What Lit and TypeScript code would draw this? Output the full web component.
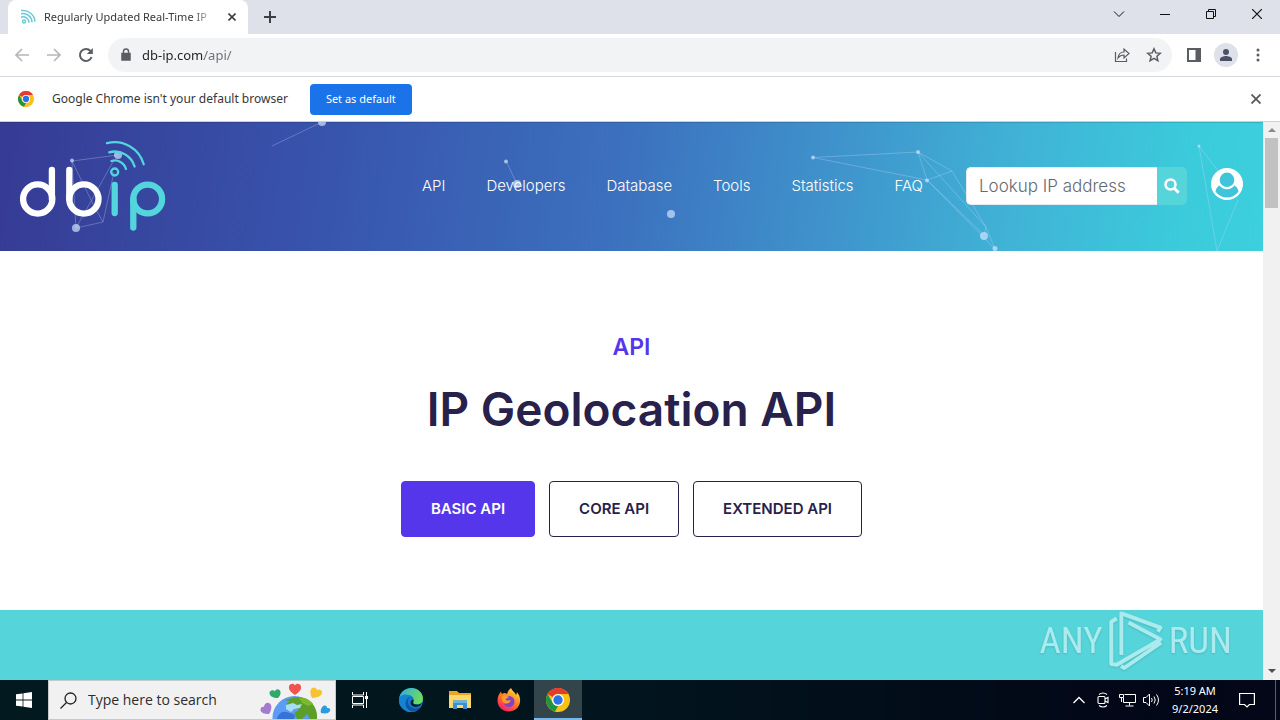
import { LitElement, html, css, svg } from "lit";
import { customElement } from "lit/decorators.js";

const chromeLogo = svg`
  <circle cx="12" cy="12" r="12" fill="#fbc116"/>
  <path d="M1.6 6A12 12 0 0 1 22.4 6H12A6 6 0 0 0 6.8 9Z" fill="#e33b2e"/>
  <path d="M1.6 6 6.8 15A6 6 0 0 0 12 18L12.2 18 9.5 23.7A12 12 0 0 1 1.6 6Z" fill="#229342"/>
  <path d="M17.2 15 12 24A12 12 0 0 1 9 23.6L12.2 18Z" fill="#fbc116"/>
  <circle cx="12" cy="12" r="6" fill="#fff"/>
  <circle cx="12" cy="12" r="4.7" fill="#2a74e8"/>`;

@customElement("browser-tabs")
export class BrowserTabs extends LitElement {
  static styles = css`
    :host { display: block; background: #dee1e9; font: 11px/16px "Noto Sans", sans-serif; }
    .strip { display: flex; height: 34px; align-items: stretch; }
    .tab { box-sizing: border-box; width: 240px; margin-left: 8px; padding: 0 8px 0 12px; display: flex; align-items: center; gap: 8px; background: #fff; border-radius: 8px 8px 0 0; color: #35373b; }
    .title { flex: 1; min-width: 0; white-space: nowrap; mask-image: linear-gradient(90deg, #000 148px, transparent 174px); }
    .favicon { stroke: #6cc9d8; }
    button { border: 0; background: none; padding: 0; display: grid; place-items: center; }
    .close { width: 16px; height: 16px; }
    .add { width: 44px; }
    .controls { margin-left: auto; display: flex; height: 28px; }
    .controls button { width: 46px; }
    svg { display: block; fill: none; stroke: #111; }
    svg.favicon { stroke: #6cc9d8; }
    .close svg, .add svg { stroke: #3c3f44; }
  `;
  render() {
    return html`<div class="strip">
      <div class="tab">
        <svg class="favicon" width="16" height="16" viewBox="0 0 16 16" stroke-width="1.500"><circle cx="4" cy="12.6" r="1.5"/><path d="M1 8.2a6 6 0 0 1 8 5.6M1 4.8a9 9 0 0 1 11 8.4M1 1.6a12 12 0 0 1 14 11"/></svg>
        <span class="title">Regularly Updated Real-Time IP</span>
        <button class="close" aria-label="Close tab"><svg width="8" height="8" viewBox="0 0 8 8" stroke-width="1.600"><path d="m.5.5 7 7m0-7-7 7"/></svg></button>
      </div>
      <button class="add" aria-label="New tab"><svg width="12" height="12" viewBox="0 0 12 12" stroke-width="2"><path d="M6 0v12M0 6h12"/></svg></button>
      <div class="controls">
        <button aria-label="Search tabs"><svg width="12" height="12" viewBox="0 0 12 12"><path d="m1 3.500 5 5 5-5"/></svg></button>
        <button aria-label="Minimize"><svg width="10" height="10" viewBox="0 0 10 10"><path d="M0 5.500h10"/></svg></button>
        <button aria-label="Restore"><svg width="10" height="10" viewBox="0 0 10 10"><path d="M.5 2.500h7v7h-7zM2.500 2.500v-2h7v7h-2"/></svg></button>
        <button aria-label="Close"><svg width="10" height="10" viewBox="0 0 10 10" stroke-width="1.200"><path d="m0 0 10 10M10 0 0 10"/></svg></button>
      </div>
    </div>`;
  }
}

@customElement("browser-toolbar")
export class BrowserToolbar extends LitElement {
  static styles = css`
    :host { display: block; background: #fff; border-bottom: 1px solid #d5d8dc; }
    .bar { height: 42px; padding: 0 10px; display: flex; align-items: center; gap: 8px; }
    button { border: 0; background: none; padding: 0; width: 24px; height: 24px; display: grid; place-items: center; }
    svg { display: block; fill: none; stroke: #5a5d61; }
    .history { display: flex; gap: 8px; }
    .idle { stroke: #b5b7ba; }
    .omnibox { flex: 1; height: 34px; border-radius: 17px; background: #f1f3f5; display: flex; align-items: center; gap: 9px; padding: 0 6px 0 11px; margin: 0 2px; }
    .url { flex: 1; min-width: 0; border: 0; padding: 0; outline: 0; font: 13px/20px "Noto Sans", sans-serif; color: transparent; -webkit-text-fill-color: transparent; background: linear-gradient(90deg, #202124 62px, #6b6e73 62px); background-clip: text; -webkit-background-clip: text; }
    .actions { display: flex; gap: 8px; }
    .avatar { background: #dee1e9; border-radius: 50%; }
  `;
  render() {
    return html`<div class="bar">
      <div class="history">
        <button aria-label="Back"><svg class="idle" width="14" height="14" viewBox="0 0 14 14" stroke-width="1.700"><path d="M14 7H1M7 1 1 7l6 6"/></svg></button>
        <button aria-label="Forward"><svg class="idle" width="14" height="14" viewBox="0 0 14 14" stroke-width="1.700"><path d="M0 7h13M7 1l6 6-6 6"/></svg></button>
        <button aria-label="Reload"><svg width="16" height="16" viewBox="0 0 16 16" stroke-width="2"><path d="M13.600 10A6 6 0 1 1 12.500 4"/><path d="M14.800 1v6h-6z" fill="#5a5d61" stroke="none"/></svg></button>
      </div>
      <div class="omnibox">
        <svg width="14" height="14" viewBox="0 0 14 14"><path d="M3 5.500h8v6.500h-8z" fill="#5a5d61" stroke-width="1.500"/><path d="M4.500 5.500V3.500a2.500 2.500 0 0 1 5 0v2" stroke-width="1.400"/></svg>
        <input class="url" aria-label="Address" .value=${"db-ip.com/api/"}>
        <div class="actions">
          <button aria-label="Share"><svg width="16" height="16" viewBox="0 0 16 16" stroke-width="1.200"><path d="M1.500 5v9.500h11v-3M4 11c.5-4 2.500-6 6-6V2l5 4.500-5 4.500V8C7.500 8 5.500 9 4 11Z"/></svg></button>
          <button aria-label="Bookmark"><svg width="16" height="16" viewBox="0 0 16 16" stroke-width="1.500"><path d="m8 1.800 1.800 4.100 4.500.4-3.400 3 1 4.400L8 11.400l-3.900 2.300 1-4.400-3.400-3 4.500-.4z"/></svg></button>
        </div>
      </div>
      <div class="actions">
        <button aria-label="Side panel"><svg width="14" height="14" viewBox="0 0 14 14"><path d="M1 1h12v12H1z" stroke-width="2"/><path d="M9 1h4v12H9z" fill="#5a5d61"/></svg></button>
        <button class="avatar" aria-label="Profile"><svg width="14" height="14" viewBox="0 0 14 14"><g fill="#4b5066" stroke="none"><circle cx="7" cy="4" r="3"/><path d="M1 13v-2c0-2 4-3 6-3s6 1 6 3v2z"/></g></svg></button>
        <button aria-label="Menu"><svg width="4" height="14" viewBox="0 0 4 14"><g fill="#5a5d61" stroke="none"><circle cx="2" cy="2" r="1.500"/><circle cx="2" cy="7" r="1.500"/><circle cx="2" cy="12" r="1.500"/></g></svg></button>
      </div>
    </div>`;
  }
}

@customElement("default-notice")
export class DefaultNotice extends LitElement {
  static styles = css`
    :host { display: block; background: #fff; border-bottom: 1px solid #c9d3dc; }
    .bar { height: 44px; padding: 0 16px 0 18px; display: flex; align-items: center; font: 12px/20px "Noto Sans", sans-serif; color: #35373b; }
    .text { margin: 0 22px 0 18px; }
    .set { border: 0; border-radius: 4px; height: 31px; padding: 0 16px; background: #1a73e8; color: #fff; font: 11px/16px "Noto Sans", sans-serif; }
    .close { margin-left: auto; border: 0; background: none; padding: 0; width: 16px; height: 16px; display: grid; place-items: center; }
    svg { display: block; }
  `;
  render() {
    return html`<div class="bar">
      <svg width="16" height="16" viewBox="0 0 24 24">${chromeLogo}</svg>
      <span class="text">Google Chrome isn't your default browser</span>
      <button class="set">Set as default</button>
      <button class="close" aria-label="Dismiss"><svg width="10" height="10" viewBox="0 0 10 10" fill="none" stroke="#55585c" stroke-width="1.800"><path d="m.5.5 9 9m0-9-9 9"/></svg></button>
    </div>`;
  }
}

@customElement("site-header")
export class SiteHeader extends LitElement {
  static styles = css`
    :host { display: block; position: relative; background: linear-gradient(98deg, #363b94 0%, #3854ad 26%, #3c72bf 50%, #3f94cc 66%, #40b3d6 80%, #3bccdc 94%, #3ccfdd 100%); box-shadow: inset 0 1px #00000022; font-family: Inter, "Noto Sans", sans-serif; }
    .net { position: absolute; inset: 0; width: 100%; height: 100%; }
    .bar { position: relative; display: flex; align-items: center; height: 129px; box-sizing: border-box; padding: 0 20px 1px; }
    .logo { display: block; }
    nav { margin-left: auto; display: flex; justify-content: space-between; flex: 0 1 501px; }
    nav a { color: #fff; text-decoration: none; font-size: 15px; line-height: 20px; font-weight: 300; }
    form { display: flex; margin: 0 24px 0 43px; height: 38px; }
    input { box-sizing: border-box; width: 191px; border: 1px solid #e4eaf0; border-right: 0; border-radius: 5px 0 0 5px; padding: 0 12px; background: #fff; font: 300 17px/24px Inter, sans-serif; color: #333; }
    input::placeholder { color: #666a70; opacity: 1; }
    form button { border: 0; width: 30px; padding: 0; border-radius: 0 5px 5px 0; background: #55d4da; display: grid; place-items: center; }
    svg { display: block; }
  `;
  render() {
    return html`
      <svg class="net" viewBox="0 0 1263 129" preserveAspectRatio="xMidYMid slice" aria-hidden="true">
        <g fill="none" stroke="#c9dcff" stroke-opacity=".3">
          <path d="M118 33 72 39l21 43 10 18M72 39l4 67 27-6 11-50M114 38 76 106M272 24l50-24M506 39l11 23"/>
          <path d="M813 35.500 918 30l34 19-25 9-9-28 68 75M813 35.500 927 58l57 55 2-8-34-56M927 58l68 69-9-22M1199 24l20 26M1199 24l18 105 21-51"/>
        </g>
        <g fill="#cfe2ff" fill-opacity=".7">
          <circle cx="72" cy="38.500" r="2"/><circle cx="118" cy="33" r="4"/><circle cx="76" cy="106" r="4"/><circle cx="322" cy="0" r="4"/>
          <circle cx="506" cy="39.500" r="2"/><circle cx="517" cy="62" r="4"/><circle cx="671" cy="92" r="4"/>
          <circle cx="813" cy="35.500" r="2"/><circle cx="918" cy="30" r="2"/><circle cx="927" cy="58.500" r="2"/><circle cx="984" cy="114" r="4"/><circle cx="995" cy="126.500" r="2.500"/><circle cx="1199" cy="24" r="1.500"/>
        </g>
      </svg>
      <div class="bar">
        <a class="logo" href="#" aria-label="db-ip home">
          <svg width="146" height="92" viewBox="20 140 146 92" fill="none" stroke-width="6.300" stroke-linecap="round">
            <g stroke="#fff"><circle cx="37.700" cy="199" r="14.600"/><path d="M51.900 170v29M69.300 170v29"/><circle cx="83.900" cy="199" r="14.600"/></g>
            <g stroke="#53d5de"><path d="M114.700 185v28M133.300 199v28.500"/><circle cx="147.700" cy="199" r="14.400"/>
            <g stroke-width="2.300"><circle cx="114.700" cy="172" r="3.500"/><path d="M111.500 161A11.500 11.500 0 0 1 126 169M109.200 152.300A20.600 20.600 0 0 1 134.600 166.500M107 143.200A30 30 0 0 1 143.700 164.300"/></g></g>
          </svg>
        </a>
        <nav>${["API", "Developers", "Database", "Tools", "Statistics", "FAQ"].map((t) => html`<a href="#">${t}</a>`)}</nav>
        <form @submit=${(e: Event) => e.preventDefault()}>
          <input aria-label="Lookup IP address" placeholder="Lookup IP address">
          <button aria-label="Search"><svg width="16" height="16" viewBox="0 0 16 16" fill="none" stroke="#fff"><circle cx="6.500" cy="6.500" r="5" stroke-width="2.500"/><path d="m10.300 10.300 4.400 4.400" stroke-width="3"/></svg></button>
        </form>
        <a href="#" aria-label="Account"><svg width="32" height="36" viewBox="0 0 32 36"><circle cx="16" cy="16" r="16" fill="#fff"/><path d="M4.500 23.500C5 20.500 6.500 18.500 8.500 17.500a9.300 9.300 0 0 0 15 0c2 1 3.500 3 4 6A14 14 0 0 1 4.500 23.500Z" fill="#3fc4da"/><circle cx="16" cy="11.800" r="7.300" fill="#3fc4da"/></svg></a>
      </div>`;
  }
}

@customElement("api-hero")
export class ApiHero extends LitElement {
  static styles = css`
    :host { display: block; background: #fff; font-family: Inter, "Noto Sans", sans-serif; text-align: center; color: #27214b; }
    section { padding: 80px 20px 73px; }
    .eyebrow { margin: 0; color: #5636ea; font-size: 23px; line-height: 32px; font-weight: 600; }
    h1 { margin: 15px 0 41px; font-size: 46px; line-height: 62px; font-weight: 600; }
    .plans { display: flex; justify-content: center; gap: 14px; }
    .plans button { height: 56px; padding: 0 29px; border: 1px solid #27214b; border-radius: 4px; background: #fff; color: #27214b; font: 600 15px/20px Inter, sans-serif; }
    .plans .active { background: #5636ea; border-color: #5636ea; color: #fff; }
  `;
  render() {
    return html`<section>
      <p class="eyebrow">API</p>
      <h1>IP Geolocation API</h1>
      <div class="plans">
        <button class="active">BASIC API</button><button>CORE API</button><button>EXTENDED API</button>
      </div>
    </section>`;
  }
}

@customElement("task-bar")
export class TaskBar extends LitElement {
  static styles = css`
    :host { display: block; background: linear-gradient(90deg, #01191f, #02141d 50%, #020817 85%, #030718); }
    .bar { height: 40px; display: flex; align-items: stretch; }
    button { border: 0; background: none; padding: 0; width: 48px; display: grid; place-items: center; }
    svg { display: block; }
    .search { box-sizing: border-box; width: 288px; display: flex; align-items: center; background: #f1f1f2; border: 1px solid #c5cacc; padding-left: 11px; gap: 11px; }
    .search input { flex: 1; min-width: 0; border: 0; padding: 0; background: none; font: 14px/20px "Open Sans", sans-serif; }
    .search input::placeholder { color: #2d2d2d; opacity: 1; }
    .art { align-self: flex-end; margin-right: 4px; }
    .apps { display: flex; gap: 1px; margin-left: 3px; }
    .open { background: #33444b; box-shadow: inset 0 -2px #76b9ed; }
    .tray { margin-left: auto; display: flex; align-items: center; color: #fff; }
    .tray button { width: 24px; height: 40px; }
    .tray .clock { width: 64px; display: block; text-align: center; color: #fff; font: 11px/18px "Noto Sans", sans-serif; }
    .tray .notes { width: 40px; }
    .peek { width: 5px; height: 40px; box-sizing: border-box; border-left: 1px solid #59616d; margin-left: 8px; }
    .line { fill: none; stroke: #fff; }
  `;
  render() {
    return html`<div class="bar">
      <button aria-label="Start"><svg width="16" height="16" viewBox="0 0 16 16" fill="#fff"><path d="M0 2.300 6.600 1.400v6.200H0zM7.400 1.300 16 0v7.600H7.400zM0 8.400h6.600v6.200L0 13.700zM7.400 8.400H16V16l-8.600-1.300z"/></svg></button>
      <label class="search">
        <svg width="17" height="17" viewBox="0 0 17 17" fill="none" stroke="#222" stroke-width="1.300"><circle cx="10.500" cy="6.500" r="5.500"/><path d="M6.500 10.500.5 16.500"/></svg>
        <input aria-label="Type here to search" placeholder="Type here to search">
        <svg class="art" width="72" height="38" viewBox="0 0 72 38">
          <circle cx="35.500" cy="37" r="22" fill="#5c9cf5"/>
          <path d="M30 18c8-4 17-2 23 4 4 5 5.500 10 5 16h-7l-3-5-5 5H38l-3-6 5-3-3-3-5 1-5-4 4-3-6-1z" fill="#5c9e28"/>
          <path d="M18 38c1-4 4-8 9-7 3 1 8 1 9 4l-1 3z" fill="#3573d9"/><path d="M27 24l7-2 4 2 5-1-2 4-6 1-3 3-5-3z" fill="#a7dcf6"/><path d="M40 17c6-1 11 2 14 6l-5 2-6-3z" fill="#7ab82f"/>
          <path d="M36 14c-4-3-6.500-5-6-8.500.7-3.500 5-3.500 6-1 1-2.500 5.300-2.500 6 1 .5 3.500-2 5.500-6 8.500Z" fill="#f0544c"/>
          <path d="M19 17c-5 0-8.500-2-8.500-5 .2-3 4-3.500 5.500-1.500.6-3 5-3 5.500.5.3 2-.5 4-2.500 6Z" fill="#2fa96a"/>
          <path d="M53 17c-2-4-2.300-7-.5-9.500 2-2 5-1 5.500 1.500 2.500-1.500 5.500 0 5 3-.6 3.500-5 4.500-10 5Z" fill="#f7c330"/>
          <path d="M10 33c-4.500 0-8-1-8.500-4 0-3 2-4 3.500-3 0-4 5-6 7-2 1 3 0 6-2 9Z" fill="#a47bd0"/>
          <path d="M62 32c-1-3 1-7 3.500-7.500 2 0 2.500 1 2.500 2.500 2.500-.5 4 1 3 3-1.300 2.500-5 3-9 2Z" fill="#2a9be0"/>
        </svg>
      </label>
      <button aria-label="Task view"><svg class="line" width="17" height="16" viewBox="0 0 17 16"><path d="M.5 0v3h11V0M.5 16v-3h11v3M.5 4.500h11v7H.5zM14.500 0v16"/><path d="M13 4h3v3h-3z" fill="#fff" stroke="none"/></svg></button>
      <div class="apps">
        <button aria-label="Edge"><svg width="24" height="24" viewBox="0 0 24 24"><defs><linearGradient id="e" x1="0" y1="0" x2="1" y2=".4"><stop stop-color="#2fa9e6"/><stop offset="1" stop-color="#6bdc60"/></linearGradient></defs><circle cx="12" cy="12" r="12" fill="#1378cf"/><path d="M.3 9.500C2 3.500 7 0 12 0c7 0 12 5 12 10.500 0 4-3 6-6 6-3.500 0-4.500-1.500-3.500-3C16 10.500 13 7 9 7 5 7 1.500 9 .3 9.500Z" fill="url(#e)"/><path d="M.3 9.500C3 6 9 5.500 12 9c-3-.5-5.500 2-5.200 5.500C7.200 19 12 22 19 21.800A12 12 0 0 1 .3 9.500Z" fill="#1583d4"/><path d="M12 9c-5 2-4 9 2 11 3 1 6 0 8.500-2A12 12 0 0 1 14 23.800C8 23 5.500 17 7 13c.8-2.500 3-4 5-4Z" fill="#0c56a4"/><path d="M14.500 13.500c-1 1.500 0 3 3.500 3 2 0 4-.5 5-2-1 4-6 5.500-9.500 3.500-2.500-1.500-2.500-5 0-6.500.8 0 1.200 1 1 2Z" fill="#02202b"/></svg></button>
        <button aria-label="File Explorer"><svg width="22" height="18" viewBox="0 0 22 18"><path d="M0 0h8l2 2h12v15H0z" fill="#eda624"/><path d="M0 4h22v13H0z" fill="#fbd86b"/><path d="M4 18V9.500h14V18h-4v-4H8v4z" fill="#3c8fd0"/><path d="M4 9.500h14V12H4z" fill="#65b2e7"/></svg></button>
        <button aria-label="Firefox"><svg width="24" height="24" viewBox="0 0 24 24"><defs><linearGradient id="f" x1=".8" y1="0" x2=".2" y2="1"><stop stop-color="#ffe33a"/><stop offset=".5" stop-color="#ff7a26"/><stop offset="1" stop-color="#f5136f"/></linearGradient></defs><path d="M14 0c1 3 4 4 5 7 1-1 .8-2 .8-3C22.500 7 23.500 10 23 14c-1 6-5.500 9.500-11 9.500C5.500 23.500.5 19 .5 12.500.500 8.500 2 6 4 3.500c0 1 .3 1.700 1 2.500C7 4.500 8.500 5 10 6c1-2.500 2-4.500 4-6Z" fill="url(#f)"/><circle cx="12" cy="13.500" r="5.500" fill="#8142c8"/><path d="M5 9c2-2 5-2 7 .5-2 .3-3 1-3.300 2.500 2 1 4 .3 5 0-.5 3-3 4-5.700 3.500C6 15 4.500 12 5 9Z" fill="#ff9a26"/></svg></button>
        <button class="open" aria-label="Chrome"><svg width="24" height="24" viewBox="0 0 24 24">${chromeLogo}</svg></button>
      </div>
      <div class="tray">
        <button aria-label="Hidden icons"><svg class="line" width="12" height="8" viewBox="0 0 12 8" stroke-width="1.300"><path d="m.5 7 5.500-5.500L11.500 7"/></svg></button>
        <button aria-label="Meet now"><svg class="line" width="12" height="16" viewBox="0 0 12 16" stroke-width="1.100"><rect x="1" y="4.500" width="7" height="7" rx="1"/><path d="m8 7 3-1.500v5L8 9M2 2.500q4-3 8 0M2 13.500q4 3 8 0"/></svg></button>
        <button aria-label="Network"><svg class="line" width="17" height="14" viewBox="0 0 17 14"><path d="M5.500 1.500h11v8h-12V5M10.500 9.500v3M6.500 13h8M.5 1.500h4v3h-4zM2.500 4.500V9"/></svg></button>
        <button aria-label="Volume"><svg class="line" width="17" height="14" viewBox="0 0 17 14"><path d="M.5 4.500h2.500L6.500 1v12L3 9.500H.5zM8.500 5q1.500 2 0 4M11 3.500q2.500 3.500 0 7M13.500 1.500q4 5.500 0 11"/></svg></button>
        <button class="clock"><span>5:19 AM</span><br><span>9/2/2024</span></button>
        <button class="notes" aria-label="Notifications"><svg class="line" width="16" height="16" viewBox="0 0 16 16" stroke-width="1.200"><path d="M.6 1.500h14.800v11h-5L8 15l-2.500-2.500H.6z"/></svg></button>
        <span class="peek"></span>
      </div>
    </div>`;
  }
}

@customElement("app-root")
export class AppRoot extends LitElement {
  static styles = css`
    :host { display: flex; flex-direction: column; height: 100vh; overflow: hidden; }
    .view { flex: 1; min-height: 0; display: flex; position: relative; }
    .page { flex: 1; min-width: 0; background: #55d5da; overflow: hidden; }
    .scroll { width: 17px; background: #f1f1f1; display: flex; flex-direction: column; align-items: center; }
    .scroll svg { display: block; height: 16px; }
    .thumb { width: 13px; height: 70px; background: #c1c1c1; }
    .down { margin-top: auto; }
    .mark { position: absolute; right: 48px; bottom: 9px; display: flex; align-items: center; gap: 6px; color: #c8f3f5; opacity: .75; font: 400 37px/60px "Roboto Condensed", Roboto, sans-serif; filter: drop-shadow(0 1px 1px #3a8b9388); }
  `;
  render() {
    return html`
      <browser-tabs></browser-tabs>
      <browser-toolbar></browser-toolbar>
      <default-notice></default-notice>
      <div class="view">
        <main class="page"><site-header></site-header><api-hero></api-hero></main>
        <div class="scroll">
          <svg width="8" height="16" viewBox="0 0 8 16"><path d="m0 10 4-4 4 4z" fill="#8b8b8b"/></svg>
          <div class="thumb"></div>
          <svg class="down" width="8" height="16" viewBox="0 0 8 16"><path d="m0 5 4 4 4-4z" fill="#505050"/></svg>
        </div>
        <div class="mark"><span>ANY</span>
          <svg width="54" height="60" viewBox="238 16 166 182" fill="none" stroke="#c8f3f5" stroke-width="12" stroke-linejoin="round"><path d="M262 38 245 48V178L262 180 396 102 298 50M276 150V22L396 66 388 78M398 112 285 190 275 184"/></svg>
          <span>RUN</span></div>
      </div>
      <task-bar></task-bar>`;
  }
}
